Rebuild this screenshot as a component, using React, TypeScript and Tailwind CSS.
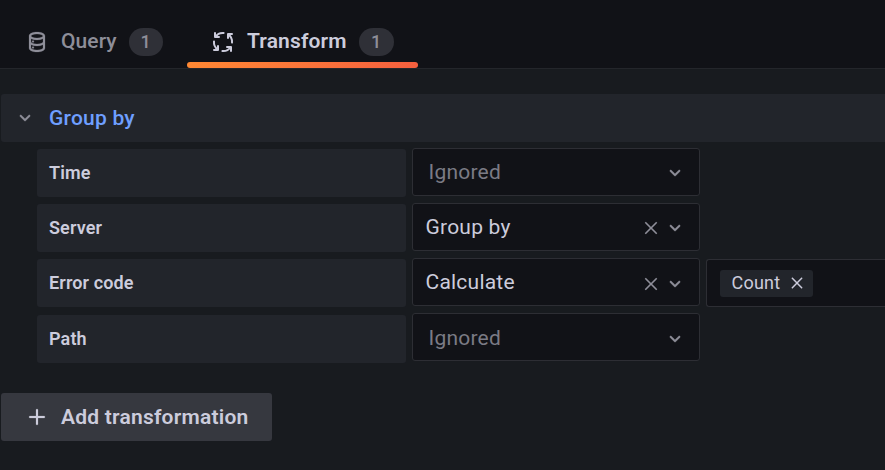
import type { ReactNode } from 'react';

const paths = {
  database:
    'M8,16.5a1,1,0,1,0,1,1A1,1,0,0,0,8,16.5ZM12,2C8,2,4,3.37,4,6V18c0,2.63,4,4,8,4s8-1.37,8-4V6C20,3.37,16,2,12,2Zm6,16c0,.71-2.28,2-6,2s-6-1.29-6-2V14.73A13.16,13.16,0,0,0,12,16a13.16,13.16,0,0,0,6-1.27Zm0-6c0,.71-2.28,2-6,2s-6-1.29-6-2V8.73A13.16,13.16,0,0,0,12,10a13.16,13.16,0,0,0,6-1.27ZM12,8C8.28,8,6,6.71,6,6s2.28-2,6-2,6,1.29,6,2S15.72,8,12,8ZM8,10.5a1,1,0,1,0,1,1A1,1,0,0,0,8,10.5Z',
  angleDown:
    'M17,9.17a1,1,0,0,0-1.41,0L12,12.71,8.46,9.17a1,1,0,0,0-1.41,0,1,1,0,0,0,0,1.42l4.24,4.24a1,1,0,0,0,1.42,0L17,10.59A1,1,0,0,0,17,9.17Z',
  times:
    'M13.41,12l6.3-6.29a1,1,0,1,0-1.42-1.42L12,10.59,5.71,4.29A1,1,0,0,0,4.29,5.71L10.59,12l-6.3,6.29a1,1,0,0,0,0,1.42,1,1,0,0,0,1.42,0L12,13.41l6.29,6.3a1,1,0,0,0,1.42,0,1,1,0,0,0,0-1.42Z',
  plus: 'M19,11H13V5a1,1,0,0,0-2,0v6H5a1,1,0,0,0,0,2h6v6a1,1,0,0,0,2,0V13h6a1,1,0,0,0,0-2Z',
};

function Icon({ name, className }: { name: keyof typeof paths; className: string }) {
  return (
    <svg viewBox="0 0 24 24" fill="currentColor" stroke="currentColor" strokeWidth="0.2" className={`shrink-0 ${className}`}>
      <path d={paths[name]} />
    </svg>
  );
}

function ProcessIcon() {
  return (
    <svg
      viewBox="0 0 24 24"
      fill="none"
      stroke="currentColor"
      strokeWidth="2"
      strokeLinecap="round"
      strokeLinejoin="round"
      className="size-6 shrink-0"
    >
      {[0, 90, 180, 270].map((angle) => (
        <path key={angle} transform={`rotate(${angle} 12 12)`} d="M4 3V7H8M4.4 6.8A9 9 0 0 1 12.6 3" />
      ))}
    </svg>
  );
}

function Counter({ children, className }: { children: ReactNode; className: string }) {
  return (
    <span className={`flex h-7 items-center justify-center rounded-full bg-[#2f3037] pr-px text-lg font-medium text-[#8e8e99] ${className}`}>
      {children}
    </span>
  );
}

function Row({ label, value, low, children }: { label: string; value?: string; low?: boolean; children?: ReactNode }) {
  return (
    <div className="flex h-[55px] items-start">
      <div className="mt-px flex h-12 w-[369px] shrink-0 items-center rounded-[3px] bg-[#22252b] pl-3 text-lg font-semibold tracking-[0.13px]">
        {label}
      </div>
      <div
        className={`ml-1.5 flex h-12 w-72 shrink-0 items-center rounded-[3px] border border-[#2d2e34] bg-[#111217] pr-3 text-[21px] tracking-[0.225px] ${low ? 'pt-0.5' : ''}`}
      >
        <span className={`flex-1 ${value ? 'pl-[12.5px]' : 'pl-[15.5px] text-[#7b7b85]'} ${low && value ? '-mt-0.5' : ''}`}>
          {value ?? 'Ignored'}
        </span>
        {value && <Icon name="times" className="mr-[3px] mt-0.5 size-[18px] text-[#8e8e99]" />}
        <Icon name="angleDown" className="mt-0.5 size-6 text-[#8e8e99]" />
      </div>
      {children}
    </div>
  );
}

export default function App() {
  return (
    <div className="h-[470px] w-[885px] overflow-hidden bg-[#181b1f] font-[Roboto,sans-serif] leading-none text-[#ccccdc]">
      <header className="flex h-[69px] border-b border-[#24262b] bg-[#111217]">
        <div className="flex h-full w-[187px] items-start pl-[25px] pt-7 text-[#8e8e99]">
          <Icon name="database" className="mt-0.5 size-6" />
          <span className="ml-3 mt-[3px] w-14 text-[21px] font-medium tracking-[0.08px]">Query</span>
          <Counter className="ml-3 w-[34px]">1</Counter>
        </div>
        <div className="flex h-full w-[231px] flex-col justify-between pt-7">
          <div className="flex items-start pl-6">
            <span className="mt-0.5"><ProcessIcon /></span>
            <span className="ml-3 mt-[3px] w-[100px] text-[21px] font-semibold tracking-[0.15px]">Transform</span>
            <Counter className="ml-3 w-[35px]">1</Counter>
          </div>
          <div className="h-1.5 rounded-[3px] bg-linear-to-r from-[#ff8833] to-[#f55f3e]" />
        </div>
      </header>

      <main className="pt-[25px]">
        <div className="ml-px flex h-12 items-center rounded-l-[3px] bg-[#22252b] pl-3">
          <Icon name="angleDown" className="size-6 text-[#8e8e99]" />
          <h2 className="ml-3 text-[21px] font-medium tracking-[0.225px] text-[#6e9fff]">Group by</h2>
        </div>
        <div className="h-[251px] pl-[37px] pt-1.5">
          <Row label="Time" />
          <Row label="Server" value="Group by" />
          <Row label="Error code" value="Calculate" low>
            <div className="ml-1.5 mt-px flex h-12 flex-1 items-center rounded-l-[3px] border border-r-0 border-[#2d2e34] bg-[#111217] pl-[13px]">
              <div className="flex h-[27px] w-[93px] items-center rounded-[3px] bg-[#22252b] pl-[11.5px] text-lg tracking-[0.2px]">
                Count
                <Icon name="times" className="ml-[8.5px] size-4" />
              </div>
            </div>
          </Row>
          <div className="flex h-[55px] items-start">
            <div className="mt-0.5 flex h-12 w-[369px] shrink-0 items-center rounded-[3px] bg-[#22252b] pl-3 text-lg font-semibold tracking-[0.13px]">
              Path
            </div>
            <div className="ml-1.5 flex h-12 w-72 shrink-0 items-center rounded-[3px] border border-[#2d2e34] bg-[#111217] pr-3 pt-0.5 text-[21px] tracking-[0.225px]">
              <span className="flex-1 pl-[15.5px] text-[#7b7b85]">Ignored</span>
              <Icon name="angleDown" className="mt-0.5 size-6 text-[#8e8e99]" />
            </div>
          </div>
        </div>
        <button className="ml-px flex h-12 w-[271px] items-center rounded-[3px] bg-[#36383f] pl-6 text-[21px] font-semibold tracking-[0.22px]">
          <Icon name="plus" className="size-6" />
          <span className="ml-3">Add transformation</span>
        </button>
      </main>
    </div>
  );
}
